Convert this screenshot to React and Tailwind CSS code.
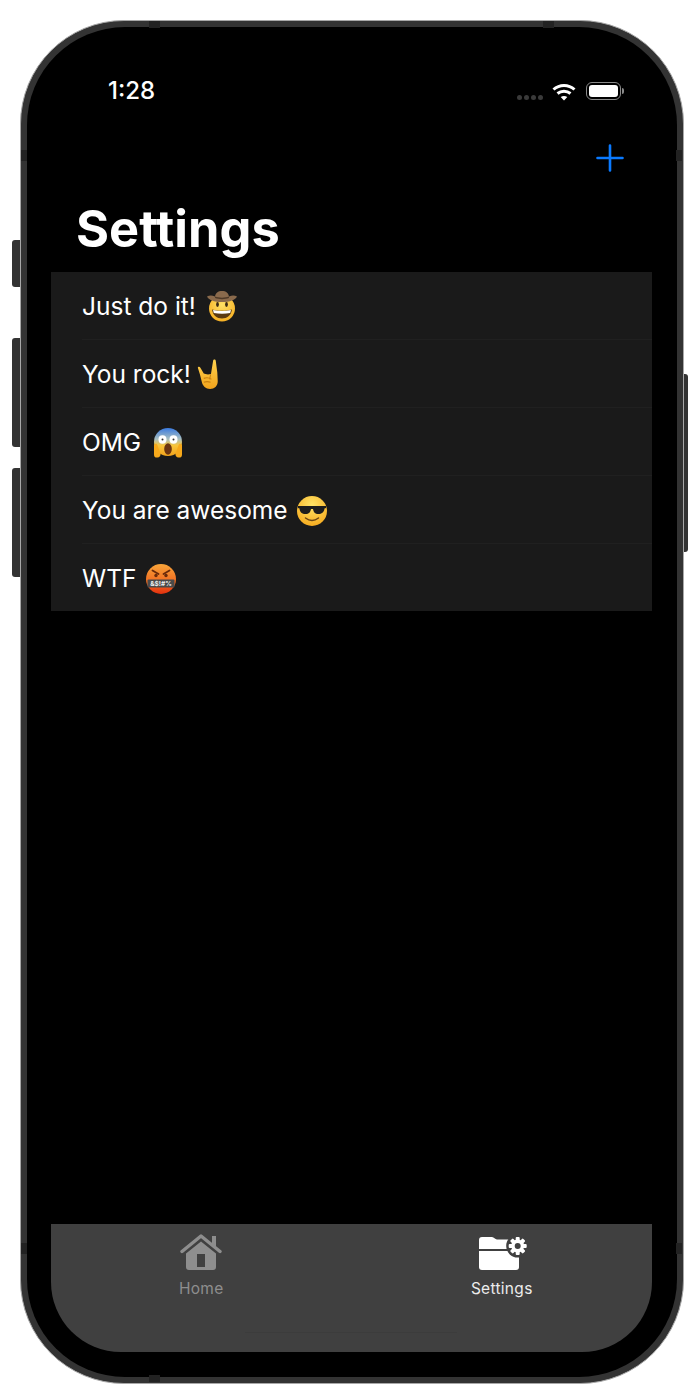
const FONT = "font-['Inter','Noto_Sans',sans-serif]";

function Cowboy() {
  return (
    <svg width="30" height="31" viewBox="0 0 30 31">
      <defs>
        <radialGradient id="faceA" cx="50%" cy="35%" r="70%">
          <stop offset="0%" stopColor="#ffe166" />
          <stop offset="100%" stopColor="#f5ac1e" />
        </radialGradient>
      </defs>
      <circle cx="15" cy="17.500" r="13" fill="url(#faceA)" />
      <path d="M0 5.500c2.500-1.500 5-1.500 8 0C8.500 2 11 0 15 0s6.500 2 7 5.500c3-1.500 5.500-1.500 8 0-1.500 3.500-7 5.500-15 5.500S1.500 9 0 5.500z" fill="#8a6a4c" />
      <path d="M8 5.500c4 1.500 10 1.500 14 0v1.500c-4 1.500-10 1.500-14 0z" fill="#4f3a28" />
      <ellipse cx="10.500" cy="13.500" rx="1.400" ry="2.400" fill="#3b2a14" />
      <ellipse cx="19.500" cy="13.500" rx="1.400" ry="2.400" fill="#3b2a14" />
      <path d="M5 18.500c6 1.800 14 1.800 20 0-.8 6-5 9-10 9s-9.200-3-10-9z" fill="#5a3a12" />
      <path d="M6 19c6 1.400 12 1.400 18 0l-.8 3c-5 1-11 1-16.400 0z" fill="#fff" />
    </svg>
  );
}

function Rock() {
  return (
    <svg width="22" height="31" viewBox="0 0 26 32" preserveAspectRatio="none">
      <defs>
        <linearGradient id="hand" x1="0" y1="0" x2="0" y2="1">
          <stop offset="0%" stopColor="#ffd34f" />
          <stop offset="100%" stopColor="#f2a31b" />
        </linearGradient>
      </defs>
      <path
        d="M1 9c0-1.500 2.500-1.500 3 0l4 6 2 .5 3 .5 3.500-.5L19 2c.3-2 3-2 3.200 0L24 14l.5 9c0 5-4 8-9 8s-9-3-10-8l-2-7z"
        fill="url(#hand)"
      />
      <path d="M8 20c3-1 6-1 9 1M8 24c3-1 5-1 8 0M16 16l-1 5" stroke="#c77f10" strokeWidth="1.200" fill="none" />
    </svg>
  );
}

function Scream() {
  return (
    <svg width="30" height="30" viewBox="0 0 30 30">
      <defs>
        <linearGradient id="faceB" x1="0" y1="0" x2="0" y2="1">
          <stop offset="0%" stopColor="#3a7be0" />
          <stop offset="40%" stopColor="#a9bfc0" />
          <stop offset="62%" stopColor="#f8c53c" />
          <stop offset="100%" stopColor="#f2a31b" />
        </linearGradient>
      </defs>
      <circle cx="15" cy="14" r="14" fill="url(#faceB)" />
      <ellipse cx="9.500" cy="11.500" rx="4" ry="4.200" fill="#fff" />
      <ellipse cx="20.500" cy="11.500" rx="4" ry="4.200" fill="#fff" />
      <circle cx="9.500" cy="11.500" r="1" fill="#333" />
      <circle cx="20.500" cy="11.500" r="1" fill="#333" />
      <ellipse cx="15" cy="21" rx="3.800" ry="5.800" fill="#6b3410" />
      <path d="M1 17c1.500-2 3-1.500 3.500.5l3 8c.5 2-1 4-3 4H3c-1.500 0-2-1.500-2-3z" fill="#f7a91b" />
      <path d="M29 17c-1.500-2-3-1.500-3.500.5l-3 8c-.5 2 1 4 3 4H27c1.500 0 2-1.500 2-3z" fill="#f7a91b" />
    </svg>
  );
}

function Shades() {
  return (
    <svg width="30" height="30" viewBox="0 0 30 30">
      <defs>
        <radialGradient id="faceC" cx="50%" cy="30%" r="75%">
          <stop offset="0%" stopColor="#ffe467" />
          <stop offset="100%" stopColor="#f5a81c" />
        </radialGradient>
      </defs>
      <circle cx="15" cy="15" r="15" fill="url(#faceC)" />
      <path d="M1 10h28v2l-1.500.5c-.5 4-3 5.500-6 5.500-3.500 0-5-2-5.500-5h-2c-.5 3-2 5-5.500 5s-5.500-1.500-6-5.500L1 12z" fill="#1d1d1d" />
      <path d="M8.500 22c4 3 9 3 13 0" stroke="#6a4414" strokeWidth="1.500" fill="none" strokeLinecap="round" />
    </svg>
  );
}

function Cursing() {
  return (
    <svg width="30" height="30" viewBox="0 0 30 30">
      <defs>
        <linearGradient id="faceD" x1="0" y1="0" x2="0" y2="1">
          <stop offset="0%" stopColor="#f8a53a" />
          <stop offset="65%" stopColor="#f0661e" />
          <stop offset="100%" stopColor="#e2300e" />
        </linearGradient>
      </defs>
      <circle cx="15" cy="15" r="15" fill="url(#faceD)" />
      <path d="M6.500 6.500l6 3.500M23.500 6.500l-6 3.500" stroke="#6a2a0a" strokeWidth="1.800" strokeLinecap="round" />
      <circle cx="10" cy="11.500" r="1.700" fill="#6a2a0a" />
      <circle cx="20" cy="11.500" r="1.700" fill="#6a2a0a" />
      <rect x="1.500" y="15.500" width="27" height="8" rx="1" fill="#4a4a4a" />
      <text x="15" y="22" textAnchor="middle" fontSize="6.500" fontWeight="700" fill="#f0f0f0" fontFamily="Inter, sans-serif">
        &amp;$!#%
      </text>
    </svg>
  );
}

function PlusIcon() {
  return (
    <svg width="28" height="28" viewBox="0 0 28 28" stroke="#0a7aff" strokeWidth="2.600" strokeLinecap="round">
      <path d="M14 1.500v25M1.500 14h25" />
    </svg>
  );
}

function HomeIcon() {
  return (
    <svg width="42" height="37" viewBox="0 0 42 37" fill="#8e8e8e">
      <rect x="32" y="3" width="4" height="10" />
      <path d="M2 18.500 21 3l19 15.500" fill="none" stroke="#8e8e8e" strokeWidth="3.400" strokeLinecap="round" strokeLinejoin="round" />
      <path
        fillRule="evenodd"
        d="M21 8.500 36 20.500V34a3 3 0 0 1-3 3H9a3 3 0 0 1-3-3V20.500zM17 21v13h8V21z"
      />
    </svg>
  );
}

function FolderGearIcon() {
  const teeth = [0, 45, 90, 135];
  return (
    <svg width="48" height="33" viewBox="0 0 48 33">
      <path d="M0 3a3 3 0 0 1 3-3h10c2 0 3 2.500 5 2.500h22V12H0z" fill="#fff" />
      <path d="M0 14h40v16a3 3 0 0 1-3 3H3a3 3 0 0 1-3-3z" fill="#fff" />
      {/* dark ring cuts the gear out of the folder */}
      <circle cx="38.700" cy="9" r="11.500" fill="#404040" />
      {teeth.map((a) => (
        <rect key={a} x="36.700" y="0" width="4" height="18" rx="1" fill="#fff" transform={`rotate(${a} 38.700 9)`} />
      ))}
      <circle cx="38.700" cy="9" r="6.500" fill="#fff" />
      <circle cx="38.700" cy="9" r="3" fill="#404040" />
    </svg>
  );
}

function WifiIcon() {
  return (
    <svg width="24" height="19" viewBox="0 0 24 19" fill="none" stroke="#fff" strokeWidth="3">
      <path d="M1.500 7.500c6-5.500 15-5.500 21 0" />
      <path d="M5.500 11.500c3.700-3 9.300-3 13 0" />
      <path d="M12 18.500 8.700 15c2-1.500 4.600-1.500 6.600 0z" fill="#fff" stroke="none" />
    </svg>
  );
}

function Battery() {
  return (
    <div className="flex items-center">
      <div className="flex h-[18px] w-[35px] rounded-[6px] border border-[#8a8a8a] p-[2px]">
        <div className="flex-1 rounded-[3px] bg-white" />
      </div>
      <div className="ml-[1px] h-[6px] w-[2px] rounded-r-sm bg-[#8a8a8a]" />
    </div>
  );
}

const rows = [
  { label: "Just do it!", Emoji: Cowboy, gap: "ml-[11px]", h: "h-[68px]" },
  { label: "You rock!", Emoji: Rock, gap: "ml-[6px]", h: "h-[68px]" },
  { label: "OMG", Emoji: Scream, gap: "ml-[12px]", h: "h-[68px]" },
  { label: "You are awesome", Emoji: Shades, gap: "ml-[9px]", h: "h-[68px]" },
  { label: "WTF", Emoji: Cursing, gap: "ml-[10px]", h: "h-[67px]" },
];

export default function App() {
  return (
    <div className={`h-[1400px] w-[700px] bg-white pl-[20px] pt-[20px] ${FONT}`}>
      <div className="relative h-[1364px] w-[664px]">
        {/* Side buttons */}
        <div className="absolute left-[-8px] top-[220px] h-[47px] w-[8px] rounded-l-[3px] bg-[#333]" />
        <div className="absolute left-[-8px] top-[318px] h-[109px] w-[8px] rounded-l-[3px] bg-[#333]" />
        <div className="absolute left-[-8px] top-[448px] h-[109px] w-[8px] rounded-l-[3px] bg-[#333]" />
        <div className="absolute right-[-4px] top-[354px] h-[178px] w-[4px] rounded-r-[3px] bg-[#333]" />

        {/* Antenna bands on the frame */}
        <div className="absolute left-[129px] top-[1px] h-[7px] w-[11px] bg-[#222]" />
        <div className="absolute left-[523px] top-[1px] h-[7px] w-[11px] bg-[#222]" />
        <div className="absolute left-[129px] top-[1355px] h-[7px] w-[11px] bg-[#222]" />
        <div className="absolute left-[1px] top-[130px] h-[11px] w-[6px] bg-[#222]" />
        <div className="absolute left-[1px] top-[1223px] h-[11px] w-[6px] bg-[#222]" />
        <div className="absolute left-[656px] top-[130px] h-[11px] w-[6px] bg-[#222]" />
        <div className="absolute left-[656px] top-[1223px] h-[11px] w-[6px] bg-[#222]" />

        {/* Phone body */}
        <div className="h-full rounded-[104px] border border-[#a8a8a8] bg-[#333] p-[6px]">
          <div className="flex h-full flex-col rounded-[98px] bg-black pb-[25px] pl-[24px] pr-[25px] pt-[46px]">
            {/* Status bar */}
            <div className="flex h-[34px] items-center justify-between pl-[57px] pr-[28px] pt-[2px]">
              <span className="text-[24px] font-medium text-white">1:28</span>
              <div className="flex items-center">
                <div className="mt-[13px] flex gap-[2px]">
                  <div className="h-[5px] w-[5px] rounded-full bg-[#3a3a3a]" />
                  <div className="h-[5px] w-[5px] rounded-full bg-[#3a3a3a]" />
                  <div className="h-[5px] w-[5px] rounded-full bg-[#3a3a3a]" />
                  <div className="h-[5px] w-[5px] rounded-full bg-[#3a3a3a]" />
                </div>
                <div className="ml-[9px] mr-[10px]">
                  <WifiIcon />
                </div>
                <Battery />
              </div>
            </div>

            {/* Nav bar */}
            <div className="mt-[32px] flex h-[33px] items-end justify-end pr-[28px]">
              <PlusIcon />
            </div>
            <h1 className="mt-[29px] h-[56px] pl-[25px] text-[50.5px] font-bold leading-[56px] text-white">Settings</h1>

            {/* List */}
            <div className="mt-[15px] bg-[#1a1a1a]">
              {rows.map(({ label, Emoji, gap, h }, i) => (
                <div key={label} className="pl-[31px]">
                  <div className={`flex items-center pt-[2px] text-[24.5px] text-white ${h} ${i < rows.length - 1 ? "border-b border-[#202020]" : ""}`}>
                    <span>{label}</span>
                    <span className={`flex ${gap}`}>
                      <Emoji />
                    </span>
                  </div>
                </div>
              ))}
            </div>

            <div className="flex-1" />

            {/* Tab bar */}
            <div className="relative grid h-[128px] grid-cols-2 rounded-b-[70px] bg-[#404040]">
              <div className="flex flex-col items-center pt-[9px]">
                <div className="flex h-[37px] items-center">
                  <HomeIcon />
                </div>
                <span className="mt-[7px] text-[15.5px] tracking-[0.3px] text-[#8e8e8e]">Home</span>
              </div>
              <div className="flex flex-col items-center pt-[12px]">
                <div className="flex h-[34px] items-center pl-[3px]">
                  <FolderGearIcon />
                </div>
                <span className="mt-[7px] text-[15.5px] tracking-[0.3px] text-[#ececec]">Settings</span>
              </div>
              {/* Home indicator */}
              <div className="absolute bottom-[19px] left-[194px] h-[1px] w-[212px] bg-[#3c3c3c]" />
            </div>
          </div>
        </div>
      </div>
    </div>
  );
}
